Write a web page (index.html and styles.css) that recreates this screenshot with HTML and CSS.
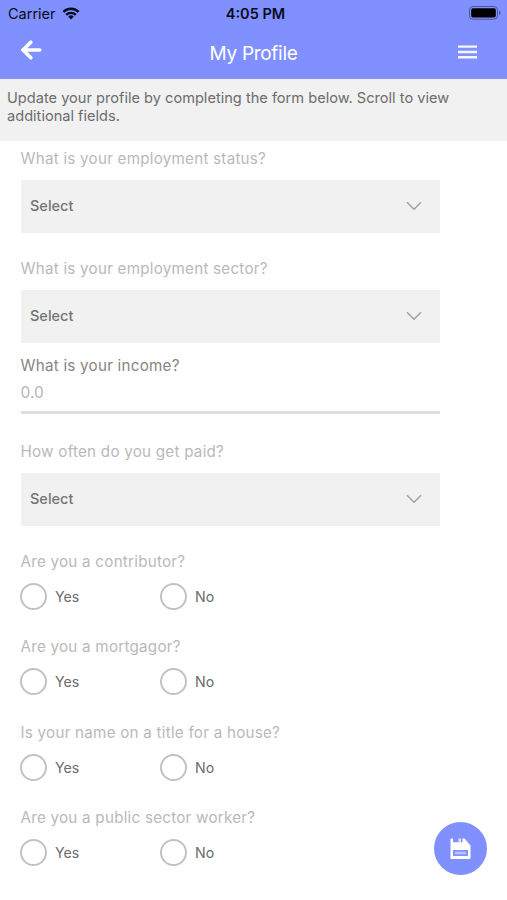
FILE: index.html
```html
<!DOCTYPE html>
<html lang="en">
<head>
<meta charset="utf-8">
<title>My Profile</title>
<link rel="stylesheet" href="styles.css">
</head>
<body>
<header class="header">
  <div class="status">
    <div class="carrier"><span>Carrier</span>
      <svg class="wifi" viewBox="0 0 18 13" width="18" height="13"><path d="M1.4 4.9A10.8 10.8 0 0 1 16.6 4.9M4.2 7.9A6.8 6.8 0 0 1 13.8 7.9" fill="none" stroke="#080b20" stroke-width="2.4"/><path d="M9 12.5 6.2 9.7A4 4 0 0 1 11.8 9.7Z" fill="#080b20"/></svg>
    </div>
    <span class="time">4:05 PM</span>
    <svg class="battery" viewBox="0 0 32 14" width="32" height="14"><rect x=".5" y=".5" width="28" height="12.7" rx="3.4" fill="none" stroke="#4c5596"/><rect x="2.2" y="2.2" width="24.6" height="9.3" rx="1.7" fill="#000"/><path d="M30 4.7q1.6.6 1.6 2.2T30 9.1Z" fill="#4c5596"/></svg>
  </div>
  <nav class="nav">
    <svg class="back" viewBox="0 0 22 20" width="22" height="20"><path d="M9.8 2.2 2 10 9.8 17.8M2.7 10H18.8" fill="none" stroke="#fff" stroke-width="3.6" stroke-linecap="round" stroke-linejoin="miter"/></svg>
    <h1 class="title">My Profile</h1>
    <svg class="menu" viewBox="0 0 19 14" width="19" height="14"><path d="M0 1.6H19M0 7H19M0 12.2H19" stroke="#f4f5ff" stroke-width="2.4"/></svg>
  </nav>
</header>
<p class="notice">Update your profile by completing the form below. Scroll to view<br>additional fields.</p>
<main class="form">
  <section class="field"><div class="label"><span>What is your employment status?</span></div>
    <div class="select"><span>Select</span><svg viewBox="0 0 16 10" width="16" height="10"><path d="M1 1.2 8 8.2 15 1.2"/></svg></div></section>
  <section class="field sector"><div class="label"><span>What is your employment sector?</span></div>
    <div class="select"><span>Select</span><svg viewBox="0 0 16 10" width="16" height="10"><path d="M1 1.2 8 8.2 15 1.2"/></svg></div></section>
  <section class="income"><div class="label dark"><span>What is your income?</span></div>
    <div class="amount"><span>0.0</span></div></section>
  <section class="field paid"><div class="label"><span>How often do you get paid?</span></div>
    <div class="select"><span>Select</span><svg viewBox="0 0 16 10" width="16" height="10"><path d="M1 1.2 8 8.2 15 1.2"/></svg></div></section>
  <section class="question"><div class="label"><span>Are you a contributor?</span></div>
    <div class="options"><div class="option"><i class="radio"></i><span>Yes</span></div><div class="option"><i class="radio"></i><span>No</span></div></div></section>
  <section class="question"><div class="label"><span>Are you a mortgagor?</span></div>
    <div class="options"><div class="option"><i class="radio"></i><span>Yes</span></div><div class="option"><i class="radio"></i><span>No</span></div></div></section>
  <section class="question"><div class="label"><span>Is your name on a title for a house?</span></div>
    <div class="options"><div class="option"><i class="radio"></i><span>Yes</span></div><div class="option"><i class="radio"></i><span>No</span></div></div></section>
  <section class="question"><div class="label"><span>Are you a public sector worker?</span></div>
    <div class="options"><div class="option"><i class="radio"></i><span>Yes</span></div><div class="option"><i class="radio"></i><span>No</span></div></div></section>
</main>
<div class="save"><svg viewBox="0 0 21 22" width="21" height="22"><path fill="#fff" fill-rule="evenodd" d="M1.5.5H3V4.3H12.5V.5H14.5L20.5 7.5V20Q20.5 21 19.5 21H1.5Q.5 21 .5 20V1.5Q.5.5 1.5.5ZM3 12V18H18V12Z"/><path d="M8.5 .5H11V4.5H8.5Z" fill="#dde1ff"/><path d="M5 15H16" stroke="#b9c2ff" stroke-width="2.6"/></svg></div>
</body>
</html>
```
FILE: styles.css
```css
* { box-sizing: border-box; }
body {
  margin: 0;
  width: 507px;
  height: 900px;
  overflow: hidden;
  background: #fff;
  font-family: Inter, "Liberation Sans", sans-serif;
  font-size: 15px;
  color: #6c6c6c;
}
svg { display: block; flex: none; }
.header { height: 79px; background: #8091ff; }
.status {
  display: grid;
  grid-template-columns: 1fr auto 1fr;
  align-items: center;
  height: 27px;
  padding: 0 6px 0 8px;
  color: #080b20;
}
.carrier { display: flex; align-items: center; gap: 6px; font-size: 14.5px; }
.wifi { margin-top: -1px; }
.time { padding-left: 2px; font-size: 14.5px; font-weight: 600; }
.battery { justify-self: end; margin-top: -1px; }
.nav {
  display: grid;
  grid-template-columns: 1fr auto 1fr;
  align-items: center;
  height: 52px;
  padding: 0 30px 0 21px;
}
.back { margin-top: -6px; }
.title {
  margin: 0;
  padding-left: 9px;
  font-size: 19px;
  font-weight: 400;
  letter-spacing: -0.3px;
  color: #fff;
}
.menu { justify-self: end; margin-top: -2px; }
.notice {
  margin: 0;
  height: 62px;
  padding: 10px 7px;
  background: #f1f1f1;
  line-height: 18px;
  font-size: 14.6px;
}
.form { width: 440px; padding: 7.5px 0 0 20.5px; }
.label {
  height: 20px;
  line-height: 20px;
  font-size: 15.2px;
  letter-spacing: 0.24px;
  white-space: nowrap;
  color: #b9b9b9;
}
.label.dark { color: #858585; }
.field { height: 85px; }
.select {
  display: flex;
  align-items: center;
  justify-content: space-between;
  height: 53px;
  margin-top: 11.3px;
  padding: 0 18px 1px 9.5px;
  background: #f1f1f1;
  font-size: 14.5px;
  font-weight: 450;
  color: #747474;
}
.select path { fill: none; stroke: #a0a0a0; stroke-width: 1.5; }
.sector { margin-top: 25px; }
.income { margin-top: 12px; }
.amount {
  height: 38px;
  border-bottom: 3px solid #dedede;
  line-height: 34px;
  font-size: 15.5px;
  color: #b5b5b5;
}
.paid { margin-top: 28px; }
.question { height: 59px; margin-top: 26.6px; }
.paid + .question { margin-top: 25px; }
.options {
  display: grid;
  grid-template-columns: 140px 140px;
  margin-top: 11px;
  margin-left: -0.5px;
}
.option { display: flex; align-items: center; gap: 8px; font-size: 14.2px; }
.radio {
  width: 27px;
  height: 27px;
  border: 2px solid #c2c2c2;
  border-radius: 50%;
}
.save {
  position: absolute;
  left: 434px;
  top: 822px;
  display: flex;
  align-items: center;
  justify-content: center;
  width: 53px;
  height: 53px;
  border-radius: 50%;
  background: #8091ff;
}
```
